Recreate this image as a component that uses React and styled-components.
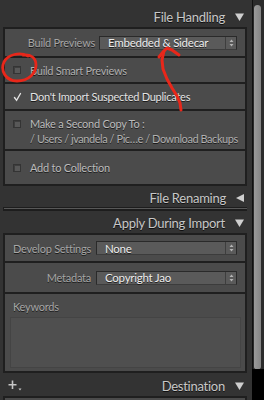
import React from "react"
import styled, { createGlobalStyle } from "styled-components"

const GlobalStyle = createGlobalStyle`
  html, body {
    margin: 0;
    padding: 0;
    background: #333333;
  }
  body {
    font-family: "Lato", "Open Sans", sans-serif;
    -webkit-font-smoothing: antialiased;
  }
`

const Screen = styled.div`
  position: relative;
  display: flex;
  width: 264px;
  height: 400px;
  overflow: hidden;
  background: #333333;
`

const Column = styled.div`
  width: 244px;
  padding: 0 5px 0 3px;
  display: flex;
  flex-direction: column;
  flex: none;
`

const Header = styled.div`
  height: ${(p) => p.$h || 22}px;
  margin-top: ${(p) => p.$top || 0}px;
  display: flex;
  align-items: center;
  justify-content: flex-end;
  gap: 10px;
  padding: 2px 3px 0 0;
  box-sizing: border-box;
  font-size: 13px;
  letter-spacing: -0.25px;
  color: #c8c8c8;
  text-shadow: 0 1px 0 rgba(0, 0, 0, 0.7);
  flex: none;
`

const Group = styled.div`
  border: 2px solid #1f1f1f;
  background: #1f1f1f;
  display: flex;
  flex-direction: column;
  gap: 2px;
  flex: none;
`

const Row = styled.div`
  height: ${(p) => p.$h}px;
  background: #4b4b4b;
  display: flex;
  align-items: ${(p) => (p.$top ? "flex-start" : "center")};
  padding: ${(p) => (p.$top ? "6px 8px 0 8px" : "0 8px")};
  gap: ${(p) => p.$gap || 9}px;
  box-sizing: border-box;
  font-size: 11px;
  letter-spacing: -0.25px;
  color: #bababa;
  text-shadow: 0 1px 0 rgba(0, 0, 0, 0.65);
`

const Label = styled.div`
  width: ${(p) => p.$w}px;
  text-align: right;
  flex: none;
  color: #a6a6a6;
  white-space: nowrap;
`

const Text = styled.div`
  color: ${(p) => (p.$bright ? "#e4e4e4" : p.$dim ? "#b0b0b0" : "#bcbcbc")};
  letter-spacing: ${(p) => (p.$tight ? "-0.45px" : "inherit")};
  white-space: nowrap;
`

const Lines = styled.div`
  flex: 1;
  display: flex;
  flex-direction: column;
  gap: 1px;
  line-height: 14px;
`

const Box = styled.div`
  width: 8px;
  height: 8px;
  flex: none;
  box-sizing: border-box;
  border: 1px solid #343434;
  background: #585858;
  margin-top: ${(p) => p.$mt || 0}px;
  box-shadow: inset 1px 1px 0 #3e3e3e;
`

const Check = styled.svg`
  width: 9px;
  height: 10px;
  flex: none;
  margin-right: -1px;
`

const Select = styled.div`
  flex: 1;
  height: 14px;
  box-sizing: border-box;
  border: 1px solid #2a2a2a;
  border-bottom-color: #3c3c3c;
  background: #5a5a5a;
  display: flex;
  align-items: center;
  color: #ededed;
  font-size: 11.5px;
`

const Value = styled.div`
  flex: 1;
  padding-left: 8px;
  white-space: nowrap;
`

const Stepper = styled.div`
  width: 10px;
  align-self: stretch;
  border-left: 1px solid #3e3e3e;
  display: flex;
  align-items: center;
  justify-content: center;
`

const Keywords = styled.div`
  display: flex;
  flex-direction: column;
  padding: 6px 4px 0 5px;
  box-sizing: border-box;
  background: #4b4b4b;
  height: 77px;
  color: #a6a6a6;
  font-size: 11px;
  letter-spacing: -0.25px;
  text-shadow: 0 1px 0 rgba(0, 0, 0, 0.65);
`

const KeywordsTitle = styled.div`
  padding-left: 3px;
  line-height: 14px;
`

const KeywordsArea = styled.div`
  margin-top: 3px;
  height: 51px;
  box-sizing: border-box;
  border: 1px solid #444;
  background: #4f4f4f;
`

const Divider = styled.div`
  height: 4px;
  box-sizing: border-box;
  border-top: 1px solid #1d1d1d;
  border-bottom: 2px solid #1d1d1d;
  border-left: 1px solid #1d1d1d;
  background: #585858;
  flex: none;
`

const Footer = styled.div`
  height: 23px;
  display: flex;
  align-items: center;
  justify-content: space-between;
  padding: 2px 3px 0 5px;
  box-sizing: border-box;
  font-size: 13px;
  letter-spacing: -0.25px;
  color: #c8c8c8;
  text-shadow: 0 1px 0 rgba(0, 0, 0, 0.7);
  flex: none;
`

const Title = styled.div`
  display: flex;
  align-items: center;
  gap: 10px;
`

const Scroll = styled.div`
  width: 12px;
  flex: none;
  display: flex;
  flex-direction: column;
  background: #000;
`

const Track = styled.div`
  height: 369px;
  box-sizing: border-box;
  border-left: 1px solid #111;
  background: #2b2b2b;
  padding: 5px 3px 0 1px;
`

const Thumb = styled.div`
  height: 364px;
  border-radius: 4px 4px 3px 3px;
  background: linear-gradient(to right, #9a9a9a, #858585);
`

const Overlay = styled.svg`
  position: absolute;
  left: 0;
  top: 0;
  width: 264px;
  height: 400px;
  pointer-events: none;
  z-index: 2;
`

const Tri = ({ dir = "down" }) =>
  dir === "down" ? (
    <svg width="9" height="8" viewBox="0 0 9 8">
      <path d="M0 0.5 H9 L4.5 8 Z" fill="#cfcfcf" />
    </svg>
  ) : (
    <svg width="8" height="8" viewBox="0 0 8 8">
      <path d="M8 0 V8 L0 4 Z" fill="#cfcfcf" />
    </svg>
  )

const Arrows = () => (
  <svg width="5" height="8" viewBox="0 0 5 8">
    <path d="M2.5 0.5 L4.5 3 H0.5 Z M2.5 7.5 L4.5 5 H0.5 Z" fill="#b4b4b4" />
  </svg>
)

const Field = ({ label, value, w, gap, h }) => (
  <Row $h={h} $gap={gap} style={{ paddingLeft: 0 }}>
    <Label $w={w}>{label}</Label>
    <Select>
      <Value>{value}</Value>
      <Stepper>
        <Arrows />
      </Stepper>
    </Select>
  </Row>
)

export default function App() {
  return (
    <Screen>
      <GlobalStyle />
      <Column>
        <Header $top={5}>
          <span>File Handling</span>
          <Tri />
        </Header>
        <Group>
          <Field h={27} w={90} gap={4} label="Build Previews" value="Embedded & Sidecar" />
          <Row $h={24}>
            <Box />
            <Text $dim>Build Smart Previews</Text>
          </Row>
          <Row $h={25}>
            <Check viewBox="0 0 9 10">
              <path
                d="M1.5 5.5 L3.6 8.3 L7.5 1.5"
                stroke="#e2e2e2"
                strokeWidth="1.4"
                fill="none"
                strokeLinecap="round"
              />
            </Check>
            <Text $bright>Don't Import Suspected Duplicates</Text>
          </Row>
          <Row $h={38} $top>
            <Box $mt={3} />
            <Lines>
              <Text>Make a Second Copy To :</Text>
              <Text $dim $tight>/ Users / jvandela / Pic…e / Download Backups</Text>
            </Lines>
            <svg width="7" height="4" viewBox="0 0 7 4" style={{ marginTop: 4, marginRight: 4 }}>
              <path d="M0 0 H7 L3.5 4 Z" fill="#a8a8a8" />
            </svg>
          </Row>
          <Row $h={33}>
            <Box />
            <Text>Add to Collection</Text>
          </Row>
        </Group>
        <Header $h={21}>
          <span>File Renaming</span>
          <Tri dir="left" />
        </Header>
        <Divider />
        <Header>
          <span>Apply During Import</span>
          <Tri />
        </Header>
        <Group>
          <Field h={26} w={86} gap={5} label="Develop Settings" value="None" />
          <Field h={29} w={86} gap={5} label="Metadata" value="Copyright Jao" />
          <Keywords>
            <KeywordsTitle>Keywords</KeywordsTitle>
            <KeywordsArea />
          </Keywords>
        </Group>
        <Footer>
          <svg width="15" height="12" viewBox="0 0 15 12">
            <path d="M4.5 0.5 V9 M0.5 4.8 H8.5" stroke="#c6c6c6" strokeWidth="1.6" />
            <path d="M10.5 8.5 H13.5 L12 10.5 Z" fill="#c6c6c6" />
          </svg>
          <Title>
            <span>Destination</span>
            <Tri />
          </Title>
        </Footer>
        <Group>
          <Row $h={20} />
        </Group>
      </Column>
      <Scroll>
        <Track>
          <Thumb />
        </Track>
      </Scroll>
      <Overlay viewBox="0 0 264 400">
        <g stroke="#e8271a" fill="none" strokeLinecap="round" strokeLinejoin="round">
          <path
            d="M28 56 C20 52 8 54 4 62 C0 71 6 81 17 81 C29 81 36 73 36 65 C36 58 31 54 23 55"
            strokeWidth="2.8"
          />
          <path
            d="M181 110 L180 103 L177 96 L172 88 L167 79 L163 69 L162 60 L164 51"
            strokeWidth="3"
          />
          <path d="M159 57 L163 52 L167 48 L172 50 L179 55" strokeWidth="3" />
        </g>
      </Overlay>
    </Screen>
  )
}
